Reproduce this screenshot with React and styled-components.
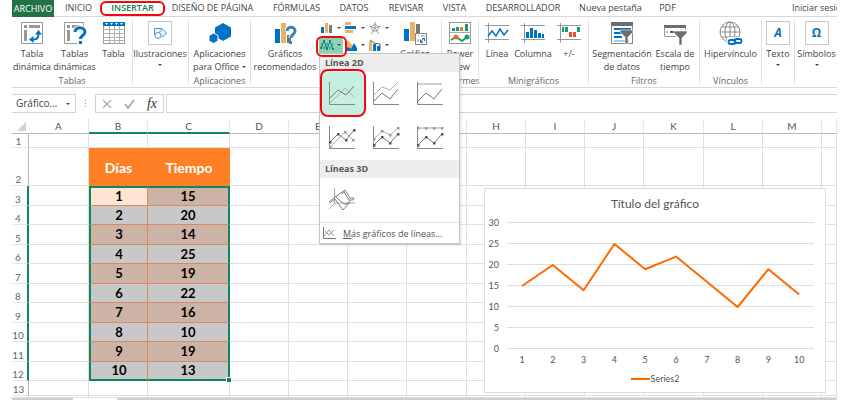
import React from 'react';
import styled, { createGlobalStyle, css } from 'styled-components';

const ui = '"Open Sans", "Noto Sans", sans-serif';
const sheetFont = 'Lato, "Open Sans", sans-serif';
const green = '#217346';
const blue = '#0072c6';
const tan = '#e8b365';
const grey = '#777';
const red = '#f5060e';

const Global = createGlobalStyle`
  * { box-sizing: border-box; }
  body { margin: 0; background: #fff; font-family: ${ui}; font-size: 9px; color: #444; }
  button, input, select { font: inherit; color: inherit; margin: 0; padding: 0; border: 0; background: none; }
  button { cursor: pointer; }
  svg { display: block; flex: none; }
`;

const Page = styled.main`
  margin: 0 13px 0 12px;
  overflow: hidden;
  position: relative;
`;

/* ---------- tabs ---------- */
const Tabs = styled.nav`
  display: flex;
  height: 17px;
  border-bottom: 1px solid #d9d9d9;
  white-space: nowrap;
`;
const Tab = styled.button`
  height: 15px;
  line-height: 15px;
  width: ${p => p.$w}px;
  flex: none;
  text-align: center;
  white-space: nowrap;
`;
const FileTab = styled(Tab)`
  height: 17px;
  background: ${green};
  color: #fff;
`;
const ActiveTab = styled(Tab)`
  position: relative;
  color: #12804f;
  font-weight: 600;
`;
const Mark = styled.span`
  position: absolute;
  inset: ${p => p.$inset};
  border: 2px solid ${red};
  border-radius: ${p => p.$r || 6}px;
  pointer-events: none;
  z-index: 5;
`;
const SignIn = styled.a`
  margin-left: auto;
  width: 45px;
  flex: none;
  line-height: 15px;
  color: inherit;
  text-decoration: none;
`;

/* ---------- ribbon ---------- */
const Ribbon = styled.div`
  display: flex;
  padding-top: 3px;
  height: 71px;
  border-bottom: 1px solid #d9d9d9;
`;
const Group = styled.section`
  width: ${p => p.$w}px;
  flex: ${p => (p.$grow ? '1 0 auto' : 'none')};
  display: flex;
  flex-direction: column;
`;
const Divider = styled.div`
  width: 1px;
  flex: none;
  height: 64px;
  background: #e1e1e1;
`;
const Items = styled.div`
  display: flex;
  height: 55px;
`;
const GroupName = styled.div`
  line-height: 12px;
  text-align: center;
  color: #666;
`;
const BigButton = styled.button`
  width: ${p => p.$w}px;
  flex: none;
  display: flex;
  flex-direction: column;
  align-items: center;
  padding-top: 1px;
  line-height: 13px;
  white-space: nowrap;
`;
const Caption = styled.span`
  margin-top: 2px;
  display: flex;
  flex-direction: column;
  align-items: center;
`;
const WithArrow = styled.span`
  display: flex;
  align-items: center;
  gap: 3px;
`;
const Framed = styled.span`
  width: 24px;
  height: 24px;
  border: 1px solid #c8c8c8;
  display: grid;
  place-items: center;
`;
const Arrow = styled.span`
  border: 2px solid transparent;
  border-top-color: #444;
  border-bottom: 0;
  margin-top: ${p => p.$top || 0}px;
`;
const SmallGrid = styled.div`
  display: grid;
  grid-template-columns: repeat(3, 24px);
  grid-template-rows: 17px 17px;
  width: 82px;
  flex: none;
  align-content: start;
`;
const SmallSlot = styled.div`
  position: relative;
`;
const SmallButton = styled.button`
  width: 24px;
  height: 100%;
  display: flex;
  align-items: center;
  gap: 4px;
  padding: 0 0 2px 2px;
  ${p => p.$on && css`background: #86d3b5; padding-left: 1px; gap: 3px;`}
`;

/* ---------- chart gallery ---------- */
const Menu = styled.div`
  position: absolute;
  z-index: 4;
  top: 16px;
  left: 0;
  width: 141px;
  background: #fff;
  border: 1px solid #c6c6c6;
  box-shadow: 1px 1px 2px rgba(0, 0, 0, 0.15);
`;
const MenuHead = styled.div`
  height: 18px;
  line-height: 18px;
  padding-left: 5px;
  background: #eee;
  font-size: 9px;
  font-weight: 700;
  color: #555;
`;
const Tiles = styled.div`
  display: grid;
  grid-template-columns: repeat(3, 44px);
  grid-auto-rows: 44px;
`;
const Tile = styled.button`
  position: relative;
  display: grid;
  place-items: center;
  border-radius: 6px;
  ${p => p.$on && css`background: #c5efdf;`}
`;
const More = styled.button`
  display: flex;
  align-items: center;
  gap: 7px;
  width: 100%;
  height: 21px;
  padding-left: 2px;
  border-top: 1px solid #e1e1e1;
  white-space: nowrap;
  color: #555;
`;

/* ---------- formula bar ---------- */
const FormulaBar = styled.div`
  display: flex;
  align-items: center;
  padding: 6px 0;
  height: 31px;
`;
const NameBox = styled.label`
  position: relative;
  width: 64px;
  height: 19px;
  border: 1px solid #d4d4d4;
  border-left: 0;
  flex: none;
  display: flex;
  align-items: center;
`;
const NameSelect = styled.select`
  appearance: none;
  width: 54px;
  padding-left: 4px;
  font-size: 10px;
  line-height: 17px;
`;
const Dots = styled.span`
  width: 19px;
  flex: none;
  display: grid;
  place-items: center;
`;
const FxBox = styled.div`
  width: 69px;
  height: 19px;
  flex: none;
  border: 1px solid #d4d4d4;
  display: flex;
  align-items: center;
  justify-content: space-between;
  padding: 0 6px;
  margin-right: 2px;
`;
const Fx = styled.button`
  font: italic 400 14px "Liberation Serif", serif;
  color: #333;
`;
const FormulaInput = styled.input`
  flex: 1;
  min-width: 0;
  height: 19px;
  border: 1px solid #d4d4d4;
  border-right: 0;
`;

/* ---------- sheet ---------- */
const Sheet = styled.div`
  position: relative;
  font-family: ${sheetFont};
`;
const Grid = styled.table`
  width: 100%;
  table-layout: fixed;
  border-collapse: separate;
  border-spacing: 0;
`;
const Col = styled.col`
  width: ${p => (p.$w ? p.$w + 'px' : 'auto')};
`;
const Row = styled.tr`
  height: ${p => p.$h}px;
`;
const ColHead = styled.th`
  padding: 0;
  height: 15px;
  font: 400 10px/12px ${sheetFont};
  color: #555;
  border-right: 1px solid #e6e6e6;
  border-bottom: ${p => (p.$on ? '2px solid #0f8560' : '1px solid #b8b8b8')};
`;
const Corner = styled(ColHead)`
  border-right-color: transparent;
`;
const CornerMark = styled.span`
  display: block;
  width: 0;
  margin-left: auto;
  margin-right: 2px;
  border-left: 9px solid transparent;
  border-bottom: 9px solid #d2d2d2;
`;
const RowHead = styled.th`
  padding: 0 3px 0 0;
  font: 400 10px/12px ${sheetFont};
  vertical-align: bottom;
  color: #666;
  border-bottom: 1px solid #e6e6e6;
  border-right: ${p => (p.$on ? '2px solid #0f8560' : '1px solid #b8b8b8')};
`;
const Cell = styled.td`
  padding: 0;
  border-right: 1px solid #e0e0e0;
  border-bottom: 1px solid #e0e0e0;
`;
const TitleCell = styled.th`
  padding: 0;
  background: #ff7f27;
  color: #fff;
  font: 700 14px ${sheetFont};
`;
const fills = { first: '#fde4d3', band: '#ccb3a6', plain: '#c8c8c8' };
const DataCell = styled.td`
  position: relative;
  padding: 0;
  text-align: center;
  font-size: 13px;
  font-weight: 700;
  line-height: 15px;
  color: #000;
  background: ${p => fills[p.$fill]};
  border-right: ${p => (p.$right ? '2px solid #0f8560' : '1px solid #d58c64')};
  border-left: ${p => (p.$right ? '0' : '2px solid #0f8560')};
  border-top: ${p => (p.$top ? '2px solid #0f8560' : '0')};
  border-bottom: ${p => (p.$bottom ? '2px solid #0f8560' : '1px solid #d58c64')};
`;
const Handle = styled.span`
  position: absolute;
  right: -3px;
  bottom: -3px;
  width: 5px;
  height: 5px;
  background: #0f8560;
  border: 1px solid #fff;
  border-right: 0;
  border-bottom: 0;
`;
const BottomBar = styled.div`
  display: flex;
  gap: 44px;
  height: 2px;
`;
const BarPiece = styled.div`
  background: #cfcfcf;
  ${p => (p.$w ? `width: ${p.$w}px;` : 'flex: 1;')}
`;

/* ---------- chart ---------- */
const ChartCard = styled.figure`
  position: absolute;
  left: 472px;
  top: 69px;
  width: 342px;
  margin: 0;
  padding: 6px 0 7px;
  background: #fff;
  border: 1px solid #dcdcdc;
  color: #555;
`;
const ChartTitle = styled.figcaption`
  text-align: center;
  font-size: 12px;
  line-height: 18px;
`;
const Plot = styled.svg`
  font: 9px ${sheetFont};
`;
const Legend = styled.div`
  display: flex;
  align-items: center;
  justify-content: center;
  gap: 1px;
  line-height: 12px;
  font-size: 9px;
`;
const LegendLine = styled.span`
  width: 19px;
  height: 2px;
  background: #ff6a00;
`;

/* ---------- icons ---------- */
const Svg = ({ w = 24, h = 24, children, ...rest }) => (
  <svg width={w} height={h} viewBox={`0 0 ${w} ${h}`} fill="none" aria-hidden="true" {...rest}>{children}</svg>
);
const Bars = ({ list }) => list.map(([x, y, w, h, c], i) => <rect key={i} x={x} y={y} width={w} height={h} fill={c} />);

const PivotIcon = () => (
  <Svg>
    <rect x="1.5" y="1.5" width="21" height="21" stroke="#999" />
    <Bars list={[[4, 4, 3, 3, '#999'], [9, 4, 11, 3, '#999'], [4, 9, 3, 11, '#999']]} />
    <path d="M12 18.500h2c3 0 4.500-2 4.500-6" stroke={blue} strokeWidth="2" />
    <path d="M15 13.500l3.500-4.500 3.500 4.500zM13.500 15l-4.500 3.500 4.500 3.500z" fill={blue} />
  </Svg>
);
const PivotsIcon = () => (
  <Svg>
    <path d="M14 22.500H1.500v-21h19V5" stroke="#999" />
    <Bars list={[[4, 4, 3, 3, '#999'], [9, 4, 8, 3, '#999'], [4, 9, 3, 11, '#999']]} />
    <path d="M12 11c0-6 10-5.500 10 0 0 3.500-4.500 3.500-4.500 7" stroke="#fff" strokeWidth="5" />
    <path d="M12 11c0-6 10-5.500 10 0 0 3.500-4.500 3.500-4.500 7" stroke={blue} strokeWidth="3" />
    <rect x="16" y="20" width="3" height="3" fill={blue} />
  </Svg>
);
const TableIcon = () => (
  <Svg>
    <rect x="1.500" y="1.500" width="21" height="21" stroke="#999" />
    <path d="M7.500 5v18M12.500 5v18M17.500 5v18M1 8.500h22M1 12.500h22M1 16.500h22M1 19.500h22" stroke="#b0b0b0" />
    <rect x="1" y="1" width="22" height="4" fill={blue} />
    <path d="M3 2h3l-1.500 2zM8 2h3l-1.500 2zM13 2h3l-1.500 2zM18 2h3l-1.500 2z" fill="#fff" />
  </Svg>
);
const ShapesIcon = () => (
  <Svg w={14} h={14}>
    <rect x="1.500" y="2.500" width="7" height="6" fill="#eef6fc" stroke="#4a97d3" />
    <path d="M9.500 3l4 4-4 4-4-4z" fill="#e3f0fa" stroke="#4a97d3" />
    <circle cx="5" cy="9.500" r="3" fill="#fff" stroke="#4a97d3" />
  </Svg>
);
const HexIcon = () => (
  <Svg>
    <path d="M15 2l8 4.500v9L15 20l-8-4.500v-9z" fill={blue} />
    <path d="M5.500 12l4.500 2.500v5.500l-4.500 2.500L1 20v-5.500z" fill={blue} stroke="#fff" />
  </Svg>
);
const RecommendedIcon = () => (
  <Svg>
    <Bars list={[[2, 8, 5, 14, blue], [8, 2, 5, 20, tan], [14, 14, 4, 8, grey]]} />
    <path d="M14 10c0-5 8-5 8 0 0 3.500-4 3.500-4 7" stroke="#fff" strokeWidth="5" />
    <path d="M14 10c0-5 8-5 8 0 0 3.500-4 3.500-4 7" stroke="#3b87bd" strokeWidth="3" />
    <rect x="16" y="20" width="3" height="3" fill="#3b87bd" />
  </Svg>
);
const PivotChartIcon = () => (
  <Svg>
    <Bars list={[[1, 8, 5, 12, blue], [7, 1, 5, 19, tan], [13, 3, 4, 9, grey]]} />
    <rect x="12.500" y="12.500" width="11" height="11" fill="#fff" stroke="#888" />
    <path d="M15 15h1M18 15h4M15 18v3" stroke="#888" />
    <path d="M18 21l3-4M19 17.500h2.500V20M17.500 18.500V21.500H20" stroke={blue} />
  </Svg>
);
const PowerViewIcon = () => (
  <Svg>
    <rect x="1.500" y="1.500" width="21" height="21" stroke="#999" />
    <path d="M1 11.500h22" stroke="#aaa" />
    <Bars list={[[4, 7, 3, 3, '#1b9a74'], [8, 6, 3, 4, '#1b9a74'], [12, 6, 3, 4, '#f07c22'], [17, 3, 3, 7, '#1b9a74']]} />
    <path d="M3 19l5-3 6 4 5-4" stroke="#1b9a74" strokeWidth="2" />
    <circle cx="8" cy="16" r="2.500" fill="#f2662b" /><circle cx="19" cy="16" r="2.500" fill="#1b9a74" />
  </Svg>
);
const Frame = () => <path d="M3.500 2v20M0 4.500h24M0 18.500h24" stroke="#999" />;
const SparkLine = () => <Svg><Frame /><path d="M3 15l4-5 4 5 4-7 4 6 4-5" stroke={blue} strokeWidth="1.500" /></Svg>;
const SparkCol = () => <Svg><Frame /><Bars list={[[5, 11, 3, 6, blue], [9, 7, 3, 10, blue], [13, 9, 3, 8, blue], [17, 12, 3, 5, blue], [21, 13, 2, 4, blue]]} /></Svg>;
const SparkWin = () => <Svg><Frame /><Bars list={[[5, 6, 2, 5, '#1b9a74'], [8, 6, 3, 5, '#1b9a74'], [12, 11, 3, 5, '#e8502a'], [16, 11, 3, 5, '#e8502a'], [20, 6, 3, 5, '#1b9a74']]} /></Svg>;
const Funnel = ({ x, y }) => <path transform={`translate(${x} ${y})`} d="M0 0h13v2L8 7v7H5V7L0 2z" fill="#6d6d6d" stroke="#fff" strokeWidth=".6" />;
const SlicerIcon = () => (
  <Svg>
    <rect x="1.500" y="1.500" width="21" height="21" stroke="#888" /><rect x="1" y="1" width="22" height="4" fill="#6d6d6d" />
    <Bars list={[[4, 7, 17, 2, blue], [4, 11, 8, 2, blue], [4, 15, 8, 2, blue], [4, 19, 15, 2, '#a8cfee']]} />
    <Funnel x={10} y={9} />
  </Svg>
);
const TimelineIcon = () => (
  <Svg>
    <path d="M13 15.500H1.500v-10h21V9" stroke="#999" /><rect x="1" y="4" width="22" height="3" fill="#6d6d6d" />
    <Bars list={[[3, 10, 2, 2, '#bbb'], [7, 10, 2, 2, blue], [9, 10, 3, 2, blue], [13, 10, 2, 2, '#8fc0e8']]} />
    <Funnel x={11} y={10} />
  </Svg>
);
const LinkIcon = () => (
  <Svg>
    <g stroke="#8a8a8a"><circle cx="11" cy="11" r="10" /><ellipse cx="11" cy="11" rx="5" ry="10" /><path d="M11 1v20M1 11h20M2.500 6h17M2.500 16h17" /></g>
    <g stroke="#fff" strokeWidth="4"><rect x="9.500" y="18" width="7" height="4" rx="2" /><rect x="15.500" y="18" width="7" height="4" rx="2" /></g>
    <g stroke={blue} strokeWidth="1.800"><rect x="9.500" y="19" width="7" height="4" rx="2" /><rect x="15.500" y="18" width="7" height="4" rx="2" /></g>
  </Svg>
);
const LetterMark = styled.span`
  color: ${blue};
  font: ${p => (p.$it ? 'italic ' : '')}700 12px ${ui};
  line-height: 16px;
`;

const small = {
  columnas: <Svg w={12} h={12}><Bars list={[[0, 5, 3, 6, blue], [4, 1, 3, 10, tan], [8, 3, 3, 8, grey]]} /></Svg>,
  barras: <Svg w={12} h={12}><Bars list={[[0, 0, 6, 3, tan], [0, 4, 11, 3, blue], [0, 8, 8, 3, tan]]} /></Svg>,
  radial: <Svg w={12} h={12}><path d="M6 0v6M6 6L0 4M6 6l6-2M6 6l-4 6M6 6l4 6M6 2l4 3-2 4H4L2 5z" stroke="#888" strokeWidth=".8" /></Svg>,
  líneas: <Svg w={14} h={12}><path d="M1 9l3-7 3 8 3-8 3 8" stroke="#198565" /><path d="M1 4l3 6 3-6 3 6 3-6" stroke="#3a7d9c" strokeWidth=".8" /><path d="M0 8h2v2H0zM3 1h2v2H3zM6 9h2v2H6zM9 1h2v2H9zM12 9h2v2h-2z" fill="#198565" /></Svg>,
  áreas: <Svg w={12} h={12}><path d="M0 12V5l3-4 5 6v5z" fill={tan} /><path d="M0 12l3-4 3 2 3-6 3 5v3z" fill={blue} /></Svg>,
  combinado: <Svg w={12} h={12}><Bars list={[[0, 2, 3, 10, tan], [4, 5, 3, 7, blue], [8, 7, 3, 5, blue]]} /><path d="M1 1l4 3 6 1v6" stroke="#555" /></Svg>,
};

/* line-chart previews of the gallery */
const Preview = ({ dark, light, dots, level }) => {
  const marks = s => s.split(' ').map((p, i) => { const [x, y] = p.split(','); return <rect key={i} x={x - 1} y={y - 1} width="2.500" height="2.500" />; });
  return (
    <Svg w={28} h={26}>
      <path d="M1.500 1v22.500H27" stroke="#888" />
      <polyline points={light} stroke={level ? '#a0a0a0' : '#b0b0b0'} />
      <polyline points={dark} stroke="#777" />
      {dots && <g fill="#999">{marks(light)}</g>}
      {dots && <g fill="#555">{marks(dark)}</g>}
    </Svg>
  );
};
const previews = [
  { dark: '2,17 10,9 18,14 26,5', light: '2,22 17,7 26,16' },
  { dark: '2,20 10,12 18,18 26,8', light: '2,14 10,6 18,9 26,1' },
  { dark: '2,20 10,12 18,18 26,8', light: '2,3 26,3', level: true },
  { dark: '2,17 10,9 18,15 26,5', light: '2,22 17,7 25,15', dots: true },
  { dark: '2,20 10,12 18,18 26,9', light: '2,14 10,6 18,10 26,3', dots: true },
  { dark: '2,20 10,12 18,18 26,9', light: '2,3 10,3 18,3 26,3', level: true, dots: true },
];
const Preview3D = () => (
  <Svg w={28} h={26}>
    <path d="M6.500 1v15M1 22l6-6h20" stroke="#aaa" />
    <path d="M1 15l5-4 11-8 5 8h4l-1 2h-4l-5-8M17 3l-3 4M2 16l5-4 8 11 7-8M8 10l8 7h3l3-4" stroke="#7c7c7c" />
  </Svg>
);

const Big = ({ w, icon, lines, arrow, framed }) => (
  <BigButton $w={w}>
    {framed ? <Framed>{icon}</Framed> : icon}
    <Caption>
      {lines.map((l, i) => arrow && i === lines.length - 1
        ? <WithArrow key={l}>{l}<Arrow /></WithArrow>
        : <span key={l}>{l}</span>)}
      {framed && <Arrow $top={4} />}
    </Caption>
  </BigButton>
);

const Gallery = () => (
  <Menu role="menu">
    <MenuHead>Línea 2D</MenuHead>
    <Tiles>
      {previews.map((p, i) => (
        <Tile key={i} $on={i === 0} aria-label={`Línea 2D, opción ${i + 1}`}>
          <Preview {...p} />
          {i === 0 && <Mark $inset="-3px -2px -1px 0" $r={8} />}
        </Tile>
      ))}
    </Tiles>
    <MenuHead>Líneas 3D</MenuHead>
    <Tiles><Tile aria-label="Línea 3D"><Preview3D /></Tile></Tiles>
    <More>
      <Svg w={14} h={13}><path d="M1.500 0v11.500H14" stroke="#777" /><path d="M2 9l5-6 5 6M3 4l4 4 5-5" stroke="#999" /></Svg>
      <span><u>M</u>ás gráficos de líneas...</span>
    </More>
  </Menu>
);

const tabs = [['DISEÑO DE PÁGINA', 101], ['FÓRMULAS', 67], ['DATOS', 48], ['REVISAR', 56], ['VISTA', 41], ['DESARROLLADOR', 96], ['Nueva pestaña', 79], ['PDF', 35]];
const columns = [['A', 60], ['B', 59], ['C', 82], ['D', 59], ['E', 59], ['F', 59], ['G', 60], ['H', 59], ['I', 59], ['J', 59], ['K', 60], ['L', 59], ['M', 59], ['', 0]];
const data = [15, 20, 14, 25, 19, 22, 16, 10, 19, 13];
const blanks = n => Array.from({ length: n }, (_, i) => <Cell key={i} />);

const py = v => 136 - v * 4.2;
const px = i => 37 + i * 30.8;

const Chart = () => (
  <ChartCard>
    <ChartTitle>Título del gráfico</ChartTitle>
    <Plot width="340" height="160" viewBox="0 0 340 160" role="img" aria-label="Series2">
      {[0, 5, 10, 15, 20, 25, 30].map(v => (
        <g key={v}>
          <path d={`M22 ${Math.round(py(v)) - 0.5}H329`} stroke="#dedede" />
          <text x="14" y={py(v) + 3} textAnchor="end" fill="#555">{v}</text>
        </g>
      ))}
      {data.map((_, i) => <text key={i} x={px(i)} y="150" textAnchor="middle" fill="#555">{i + 1}</text>)}
      <polyline points={data.map((v, i) => `${px(i)},${py(v)}`).join(' ')} fill="none" stroke="#ff6a00" strokeWidth="2" strokeLinejoin="round" />
    </Plot>
    <Legend><LegendLine />Series2</Legend>
  </ChartCard>
);

export default function App() {
  return (
    <Page>
      <Global />
      <Tabs>
        <FileTab $w={42}>ARCHIVO</FileTab>
        <Tab $w={49}>INICIO</Tab>
        <ActiveTab $w={59}>INSERTAR<Mark $inset="1px -3px -1px -3px" /></ActiveTab>
        {tabs.map(([t, w]) => <Tab key={t} $w={w}>{t}</Tab>)}
        <SignIn href="#sesion">Iniciar sesión</SignIn>
      </Tabs>

      <Ribbon>
        <Group $w={120}>
          <Items>
            <Big w={40} icon={<PivotIcon />} lines={['Tabla', 'dinámica']} />
            <Big w={45} icon={<PivotsIcon />} lines={['Tablas', 'dinámicas']} />
            <Big w={33} icon={<TableIcon />} lines={['Tabla']} />
          </Items>
          <GroupName>Tablas</GroupName>
        </Group>
        <Divider />
        <Group $w={55}><Items><Big w={54} framed icon={<ShapesIcon />} lines={['Ilustraciones']} /></Items></Group>
        <Divider />
        <Group $w={61}>
          <Items><Big w={61} arrow icon={<HexIcon />} lines={['Aplicaciones', 'para Office']} /></Items>
          <GroupName>Aplicaciones</GroupName>
        </Group>
        <Divider />
        <Group $w={190}>
          <Items>
            <Big w={68} icon={<RecommendedIcon />} lines={['Gráficos', 'recomendados']} />
            <SmallGrid>
              {Object.entries(small).map(([k, icon]) => (
                <SmallSlot key={k}>
                  <SmallButton $on={k === 'líneas'} aria-label={`Gráfico ${k}`}>{icon}<Arrow /></SmallButton>
                  {k === 'líneas' && <><Mark $inset="-1px -4px -3px -3px" /><Gallery /></>}
                </SmallSlot>
              ))}
            </SmallGrid>
            <Big w={28} icon={<PivotChartIcon />} lines={['Gráfico', 'dinámico']} />
          </Items>
          <GroupName>Gráficos</GroupName>
        </Group>
        <Divider />
        <Group $w={36}>
          <Items><Big w={36} icon={<PowerViewIcon />} lines={['Power', 'View']} /></Items>
          <GroupName>Informes</GroupName>
        </Group>
        <Divider />
        <Group $w={109}>
          <Items>
            <Big w={36} icon={<SparkLine />} lines={['Línea']} />
            <Big w={36} icon={<SparkCol />} lines={['Columna']} />
            <Big w={36} icon={<SparkWin />} lines={['+/-']} />
          </Items>
          <GroupName>Minigráficos</GroupName>
        </Group>
        <Divider />
        <Group $w={110}>
          <Items>
            <Big w={66} icon={<SlicerIcon />} lines={['Segmentación', 'de datos']} />
            <Big w={40} icon={<TimelineIcon />} lines={['Escala de', 'tiempo']} />
          </Items>
          <GroupName>Filtros</GroupName>
        </Group>
        <Divider />
        <Group $w={61}>
          <Items><Big w={61} icon={<LinkIcon />} lines={['Hipervínculo']} /></Items>
          <GroupName>Vínculos</GroupName>
        </Group>
        <Divider />
        <Group $w={32}><Items><Big w={32} framed icon={<LetterMark $it>A</LetterMark>} lines={['Texto']} /></Items></Group>
        <Divider />
        <Group $w={42} $grow><Items><Big w={43} framed icon={<LetterMark>Ω</LetterMark>} lines={['Símbolos']} /></Items></Group>
      </Ribbon>

      <FormulaBar>
        <NameBox>
          <NameSelect aria-label="Cuadro de nombres"><option>Gráfico...</option></NameSelect>
          <Arrow />
        </NameBox>
        <Dots><Svg w={2} h={8}><Bars list={[[0, 0, 1, 1, '#999'], [0, 3, 1, 1, '#999'], [0, 6, 1, 1, '#999']]} /></Svg></Dots>
        <FxBox>
          <button aria-label="Cancelar"><Svg w={10} h={10}><path d="M1 1l8 8M9 1L1 9" stroke="#aaa" strokeWidth="1.300" /></Svg></button>
          <button aria-label="Aceptar"><Svg w={11} h={10}><path d="M1 5l3 4 6-8" stroke="#aaa" strokeWidth="1.800" /></Svg></button>
          <Fx aria-label="Insertar función">fx</Fx>
        </FxBox>
        <FormulaInput aria-label="Barra de fórmulas" />
      </FormulaBar>

      <Sheet>
        <Grid>
          <colgroup><Col $w={17} />{columns.map(([c, w], i) => <Col key={i} $w={w} />)}</colgroup>
          <thead>
            <Row $h={15}>
              <Corner><CornerMark /></Corner>
              {columns.map(([c], i) => <ColHead key={i} $on={c === 'B' || c === 'C'}>{c}</ColHead>)}
            </Row>
          </thead>
          <tbody>
            <Row $h={14}><RowHead>1</RowHead>{blanks(14)}</Row>
            <Row $h={38}>
              <RowHead>2</RowHead>{blanks(1)}
              <TitleCell>Días</TitleCell><TitleCell>Tiempo</TitleCell>
              {blanks(11)}
            </Row>
            {data.map((v, i) => {
              const edge = { $top: i === 0, $bottom: i === 9 };
              const band = i % 2 ? 'plain' : 'band';
              return (
                <Row key={i} $h={i % 2 ? 19 : 20}>
                  <RowHead $on>{i + 3}</RowHead>{blanks(1)}
                  <DataCell {...edge} $fill={i ? band : 'first'}>{i + 1}</DataCell>
                  <DataCell {...edge} $fill={band} $right>{v}{i === 9 && <Handle />}</DataCell>
                  {blanks(11)}
                </Row>
              );
            })}
            <Row $h={15}><RowHead>13</RowHead>{blanks(14)}</Row>
            <Row $h={2}><Cell />{blanks(14)}</Row>
          </tbody>
        </Grid>
        <BottomBar><BarPiece $w={61} /><BarPiece /></BottomBar>
        <Chart />
      </Sheet>
    </Page>
  );
}
